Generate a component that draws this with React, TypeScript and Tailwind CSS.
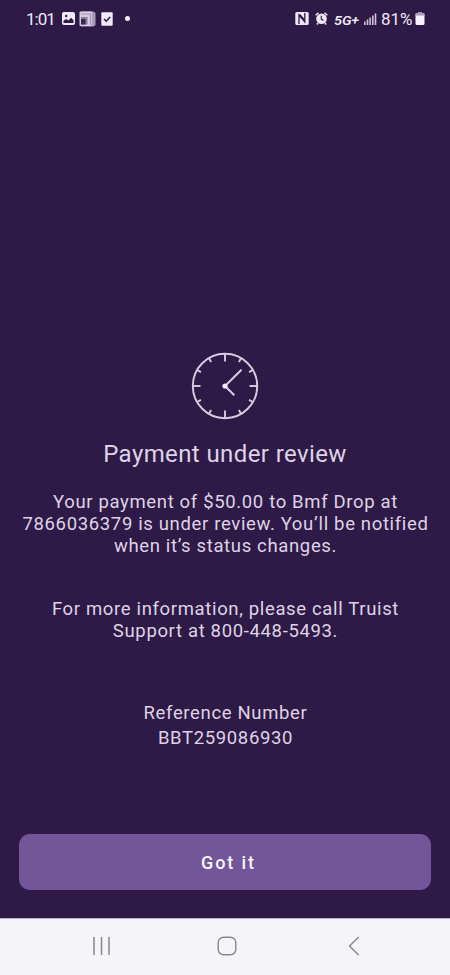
import React from "react";

const ticks = [0, 30, 60, 90, 120, 150, 180, 210, 240, 270, 300, 330];

const signalBars = [
  { x: 0, y: 8.5 },
  { x: 2.7, y: 6.5 },
  { x: 5.3, y: 4.5 },
  { x: 8, y: 2.5 },
  { x: 10.7, y: 0.5 },
];

const StatusBar = () => {
  return (
    <div className="h-[37px] pl-[26px] pr-[25px] flex items-center justify-between text-[#eee8f5]">
      <div className="flex items-center">
        <span className="w-[36px] text-[17px] leading-[20px] tracking-[-1px]">1:01</span>
        <svg width="13" height="13" viewBox="0 0 13 13">
          <rect width="13" height="13" rx="2" fill="#f0ebf6" />
          <path d="M1.5 11V8.8L4.2 7l2.4 1.6L9 5.8l2.5 2.4V11z" fill="#2e1a47" />
          <circle cx="4.2" cy="4" r="1.2" fill="#2e1a47" />
        </svg>
        <svg width="17" height="16" viewBox="0 0 17 16" className="ml-[4px]">
          <path d="M2 0.5h12.5l2 1.5v12l-2 1.5H2z" fill="#a99bb9" />
          <rect x="0.5" y="0.5" width="12.5" height="14.5" rx="1" fill="#d6cde0" />
          <path d="M2 3h9.5v11" fill="none" stroke="#a193b3" strokeWidth="1.2" />
          <rect x="2" y="6" width="6.5" height="7.5" fill="#8a7a9e" />
          <rect x="2" y="8" width="4.5" height="5.5" fill="#3a2654" />
        </svg>
        <svg width="12" height="14" viewBox="0 0 12 14" className="ml-[5px]">
          <rect x="0.3" y="0.3" width="11.4" height="13.4" rx="1" fill="#f0ebf6" />
          <path d="M3 7l2.2 2.2L9.2 5" fill="none" stroke="#2e1a47" strokeWidth="1.6" />
        </svg>
        <div className="ml-[12px] size-[5px] rounded-full bg-[#f5f1fa]"></div>
      </div>
      <div className="flex items-center">
        <svg width="14" height="13" viewBox="0 0 14 13">
          <rect x="0.3" width="13.4" height="13" rx="1.5" fill="#eee8f5" />
          <path d="M4 12V3L9.8 10V1" fill="none" stroke="#2e1a47" strokeWidth="1.3" />
          <path d="M4.5 2.5l5 5.5" stroke="#2e1a47" strokeWidth="1.6" />
        </svg>
        <svg width="13" height="13" viewBox="0 0 13 13" className="ml-[6px]">
          <circle cx="6.5" cy="6.8" r="5.3" fill="#eee8f5" />
          <path d="M0.7 3.3L3.5 0.8M12.3 3.3L9.5 0.8M3 11l-1.1 1.5M10 11l1.1 1.5" stroke="#eee8f5" strokeWidth="1.5" />
          <path d="M6.3 3.8v3.3l2.2 1.3" fill="none" stroke="#2e1a47" strokeWidth="1.2" />
        </svg>
        <span className="ml-[6px] w-[25px] pt-[4px] text-[12.5px] leading-[20px] font-semibold italic">
          <span className="inline-block origin-left scale-x-[1.16]">
            5G<span className="text-[12px]">+</span>
          </span>
        </span>
        <svg width="13" height="12" viewBox="0 0 13 12" className="ml-[5px]">
          {signalBars.map((bar) => (
            <rect key={bar.x} x={bar.x} y={bar.y} width="1.6" height={12 - bar.y} fill="#cfc4db" />
          ))}
        </svg>
        <span className="ml-[4px] w-[34px] text-[17px] leading-[20px] tracking-[-0.1px]">81%</span>
        <svg width="10" height="13" viewBox="0 0 10 13">
          <path d="M3 0h4v1.5H3z" fill="#a99bb9" />
          <rect x="0.5" y="1" width="9" height="12" rx="1.5" fill="#f5f1fa" />
          <path d="M0.5 3.5v-1A1.5 1.5 0 0 1 2 1h6a1.5 1.5 0 0 1 1.5 1.5v1z" fill="#a99bb9" />
        </svg>
      </div>
    </div>
  );
};

const ClockIcon = () => {
  return (
    <svg width="68" height="68" viewBox="0 0 68 68" fill="none" stroke="#d9cce2">
      <circle cx="34" cy="34" r="32.2" strokeWidth="1.9" />
      {ticks.map((angle) => (
        <path
          key={angle}
          d={angle % 90 === 0 ? "M34 2v7.5" : "M34 2v4.2"}
          strokeWidth="1.9"
          transform={`rotate(${angle} 34 34)`}
        />
      ))}
      <path d="M34 34L50.5 17.8M34 34l9.3 9.3" strokeWidth="2" />
      <circle cx="34" cy="34" r="2.6" fill="#f5eefa" stroke="none" />
    </svg>
  );
};

const NavBar = () => {
  return (
    <div className="h-[57px] bg-[#f5f5f8] border-t border-[#b9b1c3] pl-[92px] flex items-center pb-[2px]">
      <svg width="19" height="18" viewBox="0 0 19 18" stroke="#87878b" strokeWidth="1.5">
        <path d="M2 0v18M9.5 0v18M17 0v18" />
      </svg>
      <svg width="20" height="20" viewBox="0 0 20 20" fill="none" stroke="#87878b" strokeWidth="1.4" className="ml-[106px]">
        <rect x="1.2" y="1.2" width="17.6" height="17.6" rx="5.5" />
      </svg>
      <svg width="12" height="20" viewBox="0 0 12 20" fill="none" stroke="#87878b" strokeWidth="1.4" className="ml-[111px]">
        <path d="M10.7 1L1.5 10l9.2 9" />
      </svg>
    </div>
  );
};

export default function App() {
  return (
    <div className="w-[450px] h-[975px] bg-[#2e1a47] flex flex-col overflow-hidden font-['Roboto',sans-serif] text-[#dfd3e6]">
      <StatusBar />
      <main className="flex-1 flex flex-col items-center pt-[315px] text-center whitespace-nowrap">
        <ClockIcon />
        <h1 className="mt-[18px] text-[24px] leading-[32px] tracking-[0.4px]">Payment under review</h1>
        <p className="mt-[21px] pl-px text-[18.5px] leading-[22px] tracking-[0.65px]">
          Your payment of $50.00 to Bmf Drop at
          <br />
          7866036379 is under review. You’ll be notified
          <br />
          when it’s status changes.
        </p>
        <p className="mt-[41px] pl-px text-[18.5px] leading-[22px] tracking-[0.65px]">
          For more information, please call Truist
          <br />
          Support at 800-448-5493.
        </p>
        <p className="mt-[59px] pl-px text-[18.5px] leading-[25px] tracking-[0.65px]">
          Reference Number
          <br />
          BBT259086930
        </p>
      </main>
      <div className="px-[19px] pb-[28px]">
        <button className="w-full h-[56px] pl-[7px] rounded-[11px] bg-[#725699] text-[18px] font-medium tracking-[1.9px] text-[#fbf5ff]">
          Got it
        </button>
      </div>
      <NavBar />
    </div>
  );
}
